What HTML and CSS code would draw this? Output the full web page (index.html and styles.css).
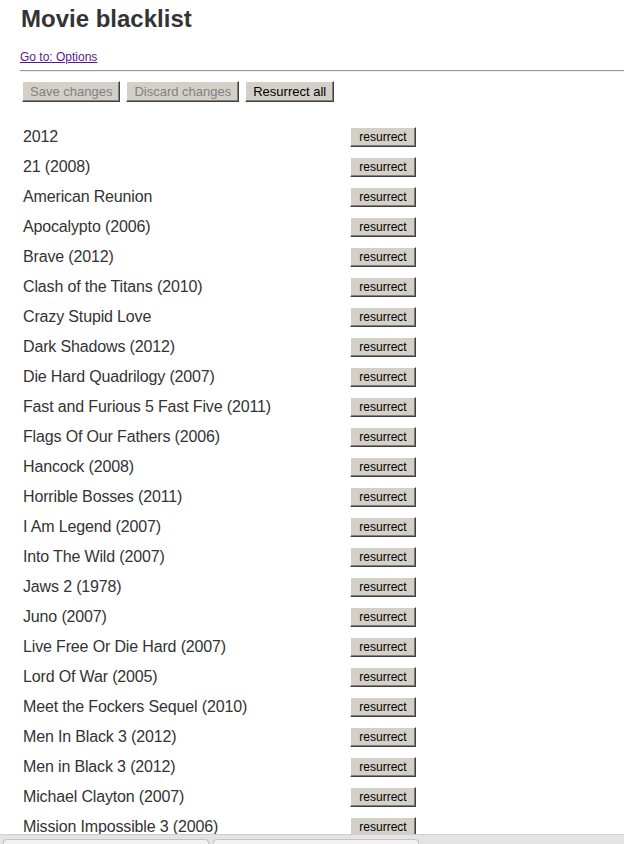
FILE: index.html
```html
<!DOCTYPE html>
<html>
<head>
<meta charset="utf-8">
<link rel="stylesheet" href="styles.css">
</head>
<body>
<div class="page">
  <h1 class="title">Movie blacklist</h1>
  <a class="goto" href="#">Go to: Options</a>
  <hr class="rule">
  <div class="toolbar">
    <button class="btn btn-big" disabled>Save changes</button>
    <button class="btn btn-big" disabled>Discard changes</button>
    <button class="btn btn-big">Resurrect all</button>
  </div>
  <ul class="list">
    <li class="row"><span class="name">2012</span><button class="btn btn-small">resurrect</button></li>
    <li class="row"><span class="name">21 (2008)</span><button class="btn btn-small">resurrect</button></li>
    <li class="row"><span class="name">American Reunion</span><button class="btn btn-small">resurrect</button></li>
    <li class="row"><span class="name">Apocalypto (2006)</span><button class="btn btn-small">resurrect</button></li>
    <li class="row"><span class="name">Brave (2012)</span><button class="btn btn-small">resurrect</button></li>
    <li class="row"><span class="name">Clash of the Titans (2010)</span><button class="btn btn-small">resurrect</button></li>
    <li class="row"><span class="name">Crazy Stupid Love</span><button class="btn btn-small">resurrect</button></li>
    <li class="row"><span class="name">Dark Shadows (2012)</span><button class="btn btn-small">resurrect</button></li>
    <li class="row"><span class="name">Die Hard Quadrilogy (2007)</span><button class="btn btn-small">resurrect</button></li>
    <li class="row"><span class="name">Fast and Furious 5 Fast Five (2011)</span><button class="btn btn-small">resurrect</button></li>
    <li class="row"><span class="name">Flags Of Our Fathers (2006)</span><button class="btn btn-small">resurrect</button></li>
    <li class="row"><span class="name">Hancock (2008)</span><button class="btn btn-small">resurrect</button></li>
    <li class="row"><span class="name">Horrible Bosses (2011)</span><button class="btn btn-small">resurrect</button></li>
    <li class="row"><span class="name">I Am Legend (2007)</span><button class="btn btn-small">resurrect</button></li>
    <li class="row"><span class="name">Into The Wild (2007)</span><button class="btn btn-small">resurrect</button></li>
    <li class="row"><span class="name">Jaws 2 (1978)</span><button class="btn btn-small">resurrect</button></li>
    <li class="row"><span class="name">Juno (2007)</span><button class="btn btn-small">resurrect</button></li>
    <li class="row"><span class="name">Live Free Or Die Hard (2007)</span><button class="btn btn-small">resurrect</button></li>
    <li class="row"><span class="name">Lord Of War (2005)</span><button class="btn btn-small">resurrect</button></li>
    <li class="row"><span class="name">Meet the Fockers Sequel (2010)</span><button class="btn btn-small">resurrect</button></li>
    <li class="row"><span class="name">Men In Black 3 (2012)</span><button class="btn btn-small">resurrect</button></li>
    <li class="row"><span class="name">Men in Black 3 (2012)</span><button class="btn btn-small">resurrect</button></li>
    <li class="row"><span class="name">Michael Clayton (2007)</span><button class="btn btn-small">resurrect</button></li>
    <li class="row"><span class="name">Mission Impossible 3 (2006)</span><button class="btn btn-small">resurrect</button></li>
  </ul>
</div>
<div class="tabbar">
  <div class="tab"></div>
  <div class="tab"></div>
</div>
</body>
</html>
```
FILE: styles.css
```css
html, body {
  margin: 0;
  padding: 0;
  background: #fff;
  overflow: hidden;
}
body {
  font-family: "Liberation Sans", Arial, sans-serif;
  color: #333;
}
.page {
  padding: 5px 0 0 20px;
}
.title {
  margin: 0 0 0 1px;
  font-size: 24px;
  line-height: 28px;
  font-weight: bold;
  color: #333;
}
.goto {
  display: block;
  width: max-content;
  margin-top: 17px;
  font-size: 12px;
  line-height: 14px;
  color: #551a8b;
  text-decoration: underline;
}
.rule {
  margin: 6px 0 0 0;
  border: 0;
  border-top: 1px solid #9a9a9a;
  border-bottom: 1px solid #eee;
  height: 0;
}
.toolbar {
  display: flex;
  gap: 6px;
  margin: 9px 0 0 2px;
}
.btn {
  font-family: "Liberation Sans", Arial, sans-serif;
  background: #d4d0c8;
  color: #000;
  border: 1px solid;
  border-color: #fff #404040 #404040 #fff;
  box-shadow: inset -1px -1px 0 #808080;
  border-radius: 0;
  margin: 0;
  cursor: default;
}
.btn:disabled {
  color: #808080;
}
.btn-big {
  font-size: 13px;
  height: 21px;
  line-height: 17px;
  padding: 0 7px 0 7px;
}
.btn-small {
  font-size: 12px;
  height: 20px;
  line-height: 16px;
  width: 66px;
  padding: 0;
}
.list {
  list-style: none;
  margin: 20px 0 0 0;
  padding: 0;
}
.row {
  display: flex;
  align-items: center;
  height: 30px;
}
.name {
  width: 327px;
  padding-left: 3px;
  font-size: 16px;
  line-height: 18px;
  letter-spacing: -0.15px;
  color: #333;
}
.tabbar {
  position: fixed;
  left: 0;
  right: 0;
  bottom: 0;
  height: 10px;
  background: #e4e4e4;
  border-top: 1px solid #d0d0d0;
  display: flex;
  gap: 4px;
  padding: 4px 0 0 3px;
  box-sizing: border-box;
}
.tab {
  width: 204px;
  height: 10px;
  background: #f2f2f2;
  border: 1px solid #c4c4c4;
  border-bottom: 0;
  border-radius: 4px 4px 0 0;
}
```
